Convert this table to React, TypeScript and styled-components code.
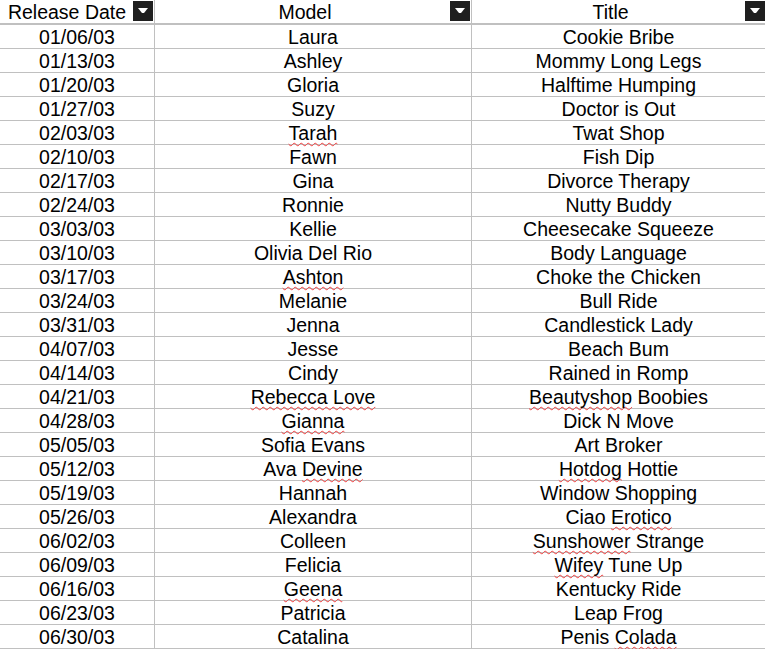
import React from "react";
import styled, { createGlobalStyle } from "styled-components";

const Global = createGlobalStyle`
  html, body { margin: 0; padding: 0; background: #ffffff; }
  body { font-family: "Liberation Sans", Arial, sans-serif; overflow: hidden; }
`;

const Sheet = styled.div`
  display: grid;
  grid-template-columns: 155px 317px 293px;
  width: 765px;
  color: #000;
  font-family: "Liberation Sans", Arial, sans-serif;
  font-size: 19.5px;
`;

const HeaderCell = styled.div<{ $last?: boolean }>`
  position: relative;
  height: 23px;
  border-bottom: 2px solid #c0c0c0;
  border-right: ${(p) => (p.$last ? "none" : "1px solid #c0c0c0")};
  line-height: 23px;
  text-align: center;
  white-space: nowrap;
`;

const HeaderLabel = styled.span<{ $shift: number }>`
  position: relative;
  left: ${(p) => p.$shift}px;
  top: 1px;
`;

const FilterButton = styled.div<{ $edge?: boolean }>`
  position: absolute;
  right: ${(p) => (p.$edge ? 0 : 1)}px;
  top: 1px;
  width: 20px;
  height: 20px;
  background: #1f1f1f;
  display: flex;
  align-items: center;
  justify-content: center;
`;

const Cell = styled.div<{ $last?: boolean }>`
  height: 22px;
  padding-top: 1px;
  border-bottom: 1px solid #c0c0c0;
  border-right: ${(p) => (p.$last ? "none" : "1px solid #c0c0c0")};
  line-height: 23px;
  text-align: center;
  white-space: nowrap;
  overflow: visible;
`;

const Misspelled = styled.span`
  text-decoration: underline wavy #f03c3c;
  text-decoration-thickness: 1px;
  text-underline-offset: 2px;
  text-decoration-skip-ink: none;
`;

const Arrow = () => (
  <svg width="10" height="6" viewBox="0 0 10 6">
    <polygon points="0,0 10,0 6,5 4,5" fill="#ffffff" />
  </svg>
);

type Row = [string, string, string];

const rows: Row[] = [
  ["01/06/03", "Laura", "Cookie Bribe"],
  ["01/13/03", "Ashley", "Mommy Long Legs"],
  ["01/20/03", "Gloria", "Halftime Humping"],
  ["01/27/03", "Suzy", "Doctor is Out"],
  ["02/03/03", "*Tarah*", "Twat Shop"],
  ["02/10/03", "Fawn", "Fish Dip"],
  ["02/17/03", "Gina", "Divorce Therapy"],
  ["02/24/03", "Ronnie", "Nutty Buddy"],
  ["03/03/03", "Kellie", "Cheesecake Squeeze"],
  ["03/10/03", "Olivia Del Rio", "Body Language"],
  ["03/17/03", "*Ashton*", "Choke the Chicken"],
  ["03/24/03", "Melanie", "Bull Ride"],
  ["03/31/03", "Jenna", "Candlestick Lady"],
  ["04/07/03", "Jesse", "Beach Bum"],
  ["04/14/03", "Cindy", "Rained in Romp"],
  ["04/21/03", "*Rebecca Love*", "*Beautyshop* Boobies"],
  ["04/28/03", "*Gianna*", "Dick N Move"],
  ["05/05/03", "Sofia Evans", "Art Broker"],
  ["05/12/03", "Ava *Devine*", "*Hotdog* Hottie"],
  ["05/19/03", "Hannah", "Window Shopping"],
  ["05/26/03", "Alexandra", "Ciao *Erotico*"],
  ["06/02/03", "Colleen", "*Sunshower* Strange"],
  ["06/09/03", "Felicia", "*Wifey* Tune Up"],
  ["06/16/03", "*Geena*", "Kentucky Ride"],
  ["06/23/03", "Patricia", "Leap Frog"],
  ["06/30/03", "Catalina", "Penis *Colada*"],
];

const renderText = (t: string) =>
  t.split(/(\*[^*]+\*)/).map((part, i) =>
    part.startsWith("*") && part.endsWith("*") ? (
      <Misspelled key={i}>{part.slice(1, -1)}</Misspelled>
    ) : (
      <React.Fragment key={i}>{part}</React.Fragment>
    )
  );

export default function App() {
  return (
    <>
      <Global />
      <Sheet>
        <HeaderCell>
          <HeaderLabel $shift={-10}>Release Date</HeaderLabel>
          <FilterButton>
            <Arrow />
          </FilterButton>
        </HeaderCell>
        <HeaderCell>
          <HeaderLabel $shift={-8}>Model</HeaderLabel>
          <FilterButton>
            <Arrow />
          </FilterButton>
        </HeaderCell>
        <HeaderCell $last>
          <HeaderLabel $shift={-8}>Title</HeaderLabel>
          <FilterButton $edge>
            <Arrow />
          </FilterButton>
        </HeaderCell>
        {rows.map((r, i) => (
          <React.Fragment key={i}>
            <Cell>{renderText(r[0])}</Cell>
            <Cell>{renderText(r[1])}</Cell>
            <Cell $last>{renderText(r[2])}</Cell>
          </React.Fragment>
        ))}
      </Sheet>
    </>
  );
}
